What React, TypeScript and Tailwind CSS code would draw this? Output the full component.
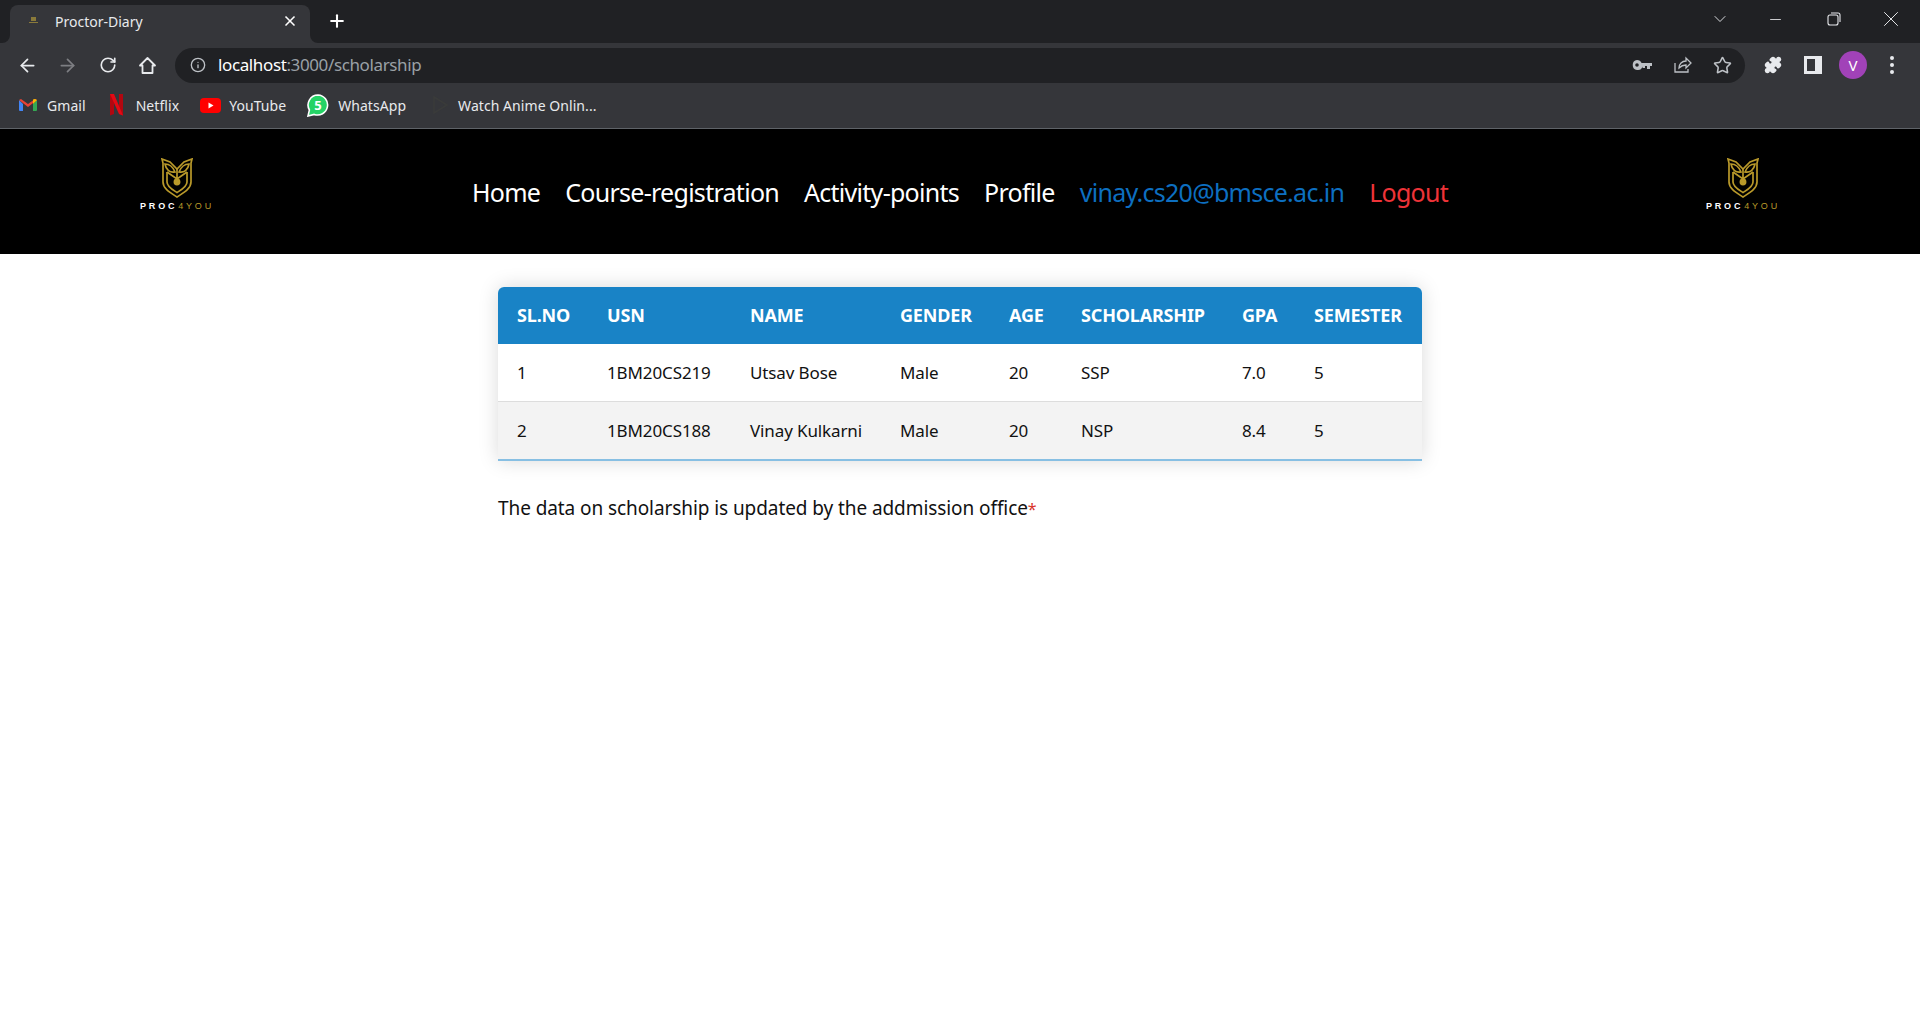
import { ArrowLeft, ArrowRight, ChevronDown, Info, Minus, Plus, Puzzle, RotateCw, Star, X } from 'lucide-react';

const students = [
  { id: 1, usn: '1BM20CS219', name: 'Utsav Bose', gender: 'Male', age: 20, scheme: 'SSP', gpa: '7.0', sem: 5 },
  { id: 2, usn: '1BM20CS188', name: 'Vinay Kulkarni', gender: 'Male', age: 20, scheme: 'NSP', gpa: '8.4', sem: 5 },
];

const headers = ['SL.NO', 'USN', 'NAME', 'GENDER', 'AGE', 'SCHOLARSHIP', 'GPA', 'SEMESTER'];
const colWidths = [90, 143, 150, 109, 72, 161, 72, 127];

function Logo() {
  return (
    <div className="mb-[14px] flex w-[74px] flex-col items-center">
      <svg width="32" height="40" viewBox="0 0 32 40" fill="none" stroke="#b9992a" strokeWidth="1.7">
        <path d="M1 1 L9 4 L16 11 L23 4 L31 1 L30 5 L30 24 C30 31 22 35 16 39 C10 35 2 31 2 24 L2 5 Z" />
        <path d="M6 14 L6 24 C6 29 12 32 16 34.5 C20 32 26 29 26 24 L26 14" />
        <path d="M4 6 C8 6 12 9 14 14 C9 15 5 12 4 6 Z M28 6 C24 6 20 9 18 14 C23 15 27 12 28 6 Z" />
        <path d="M16 11 L16 21 M6 14 L16 21 L26 14" />
        <circle cx="16" cy="24" r="2.6" fill="#b9992a" />
      </svg>
      <div className="mt-[3px] flex font-['Liberation_Sans',sans-serif] text-[9px] leading-[10px] font-bold tracking-[2.8px] whitespace-nowrap">
        <span className="text-white">PROC</span>
        <span className="ml-[1px] font-normal text-[#b9992a]">4YOU</span>
      </div>
    </div>
  );
}

function BrowserChrome() {
  return (
    <div className="font-['Noto_Sans',sans-serif] text-white">
      <div className="flex h-[43px] items-end bg-[#202124] pl-[10px]">
        <div className="relative flex h-[38px] w-[300px] items-center rounded-t-[8px] bg-[#35363a] pb-[6px] pl-[18px]">
          <svg width="8" height="8" viewBox="0 0 8 8" fill="#35363a" className="absolute bottom-0 -left-[8px]"><path d="M8 0v8H0a8 8 0 0 0 8-8Z" /></svg>
          <svg width="8" height="8" viewBox="0 0 8 8" fill="#35363a" className="absolute -right-[8px] bottom-0"><path d="M0 0v8h8a8 8 0 0 1-8-8Z" /></svg>
          <svg width="12" height="10" viewBox="0 0 12 10" fill="#8a7a3a"><path d="M3 1h5v4H3zM1 6h9v1H1z" /></svg>
          <span className="ml-[15px] text-[14px] text-[#e8eaed]">Proctor-Diary</span>
          <X size={16} strokeWidth={2.5} className="absolute left-[272px] text-white" />
        </div>
        <Plus size={20} strokeWidth={2.5} className="mb-[12px] ml-[17px] text-white" />
        <div className="ml-auto flex h-full items-center pb-[5px] text-[#e8eaed]">
          <ChevronDown size={20} strokeWidth={1.1} className="mr-[37px]" />
          <Minus size={17} strokeWidth={1.2} className="mr-[43px]" />
          <svg width="14" height="14" viewBox="0 0 14 14" fill="none" stroke="currentColor" strokeWidth="1.1" className="mr-[37px]">
            <rect x="1" y="3" width="10" height="10" rx="2" />
            <path d="M4 1h7a2 2 0 0 1 2 2v7" />
          </svg>
          <X size={26} strokeWidth={0.9} className="mr-[16px]" />
        </div>
      </div>
      <div className="flex h-[44px] items-center bg-[#35363a]">
        <ArrowLeft size={21} strokeWidth={2} className="ml-[17px] text-[#e8eaed]" />
        <ArrowRight size={21} strokeWidth={2} className="ml-[19px] text-[#7d7e82]" />
        <RotateCw size={18} strokeWidth={2.2} className="ml-[21px] text-[#e8eaed]" />
        <svg width="19" height="19" viewBox="0 0 19 19" fill="none" stroke="#e8eaed" strokeWidth="1.8" className="ml-[21px]">
          <path d="M9.5 2 2 9.5h2.5V17h10V9.5H17Z" strokeLinejoin="round" />
        </svg>
        <div className="ml-[18px] flex h-[35px] w-[1570px] items-center rounded-full bg-[#202124] pl-[15px]">
          <Info size={16} strokeWidth={2} className="text-[#bdc1c6]" />
          <span className="ml-[12px] text-[17px] tracking-[-0.38px] text-white">
            localhost<span className="text-[#9aa0a6]">:3000/scholarship</span>
          </span>
          <svg width="20" height="10" viewBox="0 0 20 10" fill="#bdc1c6" className="ml-auto">
            <path fillRule="evenodd" d="M5 0a5 5 0 0 1 4.6 3H20v3h-2v3h-3V6h-2v2h-2.5V6.4A5 5 0 1 1 5 0Zm0 3.2a1.8 1.8 0 1 0 0 3.6 1.8 1.8 0 0 0 0-3.6Z" />
          </svg>
          <svg width="20" height="20" viewBox="0 0 20 20" fill="none" stroke="#bdc1c6" strokeWidth="1.3" className="ml-[20px]">
            <path d="M3 8v9h13v-3M7 13c0-4 3-7 7-7V3l5 5-5 5v-3c-3 0-5 1-7 3Z" />
          </svg>
          <Star size={19} strokeWidth={2} className="mr-[13px] ml-[21px] text-[#bdc1c6]" />
        </div>
        <Puzzle size={18} fill="#e8eaed" className="ml-[19px] text-[#e8eaed]" />
        <svg width="18" height="18" viewBox="0 0 18 18" className="ml-[22px]">
          <path fillRule="evenodd" d="M0 0h18v18H0Zm3 3v12h8V3Z" fill="#e8eaed" />
        </svg>
        <div className="ml-[17px] flex h-[28px] w-[28px] items-center justify-center rounded-full bg-[#a142b8] text-[15px]">V</div>
        <div className="ml-[23px] flex flex-col gap-[3px]">
          <span className="h-[4px] w-[4px] rounded-full bg-[#e8eaed]" />
          <span className="h-[4px] w-[4px] rounded-full bg-[#e8eaed]" />
          <span className="h-[4px] w-[4px] rounded-full bg-[#e8eaed]" />
        </div>
      </div>
      <div className="flex h-[42px] items-center border-b border-[#5f6368] bg-[#35363a] pb-[5px] text-[14px] tracking-[0.06px] text-[#e8eaed]">
        <svg width="18" height="14" viewBox="0 0 18 14" className="ml-[19px]">
          <path d="M0 2v10a1 1 0 0 0 1 1h3V6Z" fill="#4285f4" />
          <path d="M18 2v10a1 1 0 0 1-1 1h-3V6Z" fill="#34a853" />
          <path d="M0 2 9 9l9-7-2-1-7 5-7-5Z" fill="#ea4335" />
          <path d="M14 6V1.5l2-.5 2 1Z" fill="#fbbc04" />
        </svg>
        <span className="ml-[10px]">Gmail</span>
        <svg width="13" height="22" viewBox="0 0 13 22" className="ml-[24px]">
          <path d="M0 0h4v20l-4 1.5Z" fill="#b20710" />
          <path d="M9 0h4v21.5l-4-1.5Z" fill="#b20710" />
          <path d="M0 0h4l9 21.5-4-1.5Z" fill="#e50914" />
        </svg>
        <span className="ml-[13px]">Netflix</span>
        <svg width="21" height="15" viewBox="0 0 21 15" className="ml-[21px]">
          <rect width="21" height="15" rx="4" fill="#f00" />
          <path d="m8.5 4.5 5 3-5 3Z" fill="#fff" />
        </svg>
        <span className="ml-[8px]">YouTube</span>
        <svg width="22" height="23" viewBox="0 0 22 23" className="ml-[21px]">
          <path d="M11 1a10 10 0 0 0-8.6 15L1 22l6.2-1.6A10 10 0 1 0 11 1Z" fill="#25d366" stroke="#fff" strokeWidth="1.6" />
          <text x="11" y="16" textAnchor="middle" fontSize="13" fontWeight="700" fill="#fff">5</text>
        </svg>
        <span className="ml-[9px]">WhatsApp</span>
        <svg width="15" height="18" viewBox="0 0 15 18" className="ml-[27px]">
          <path d="M1 1l13 8-13 8Z" fill="none" stroke="#3a3b3a" strokeWidth="1.5" />
        </svg>
        <span className="ml-[10px]">Watch Anime Onlin...</span>
      </div>
    </div>
  );
}

export default function App() {
  return (
    <div className="min-h-screen bg-white font-['Noto_Sans',sans-serif]">
      <BrowserChrome />
      <nav className="flex h-[125px] items-center justify-between bg-black px-[140px]">
        <Logo />
        <ul className="mt-[2px] flex gap-[25px] text-[25px] tracking-[-0.72px] whitespace-nowrap text-white">
          <li>Home</li>
          <li>Course-registration</li>
          <li>Activity-points</li>
          <li>Profile</li>
          <li className="text-[#0d6fc0]">vinay.cs20@bmsce.ac.in</li>
          <li className="text-[#ee3338]">Logout</li>
        </ul>
        <Logo />
      </nav>
      <main className="mx-auto w-[924px] pt-[33px]">
        <table className="w-full table-fixed overflow-hidden rounded-t-[6px] text-[17px] tracking-[-0.12px] text-[#111] shadow-[0_0_20px_rgba(0,0,0,0.15)]">
          <colgroup>
            {colWidths.map((w, i) => <col key={i} style={{ width: w }} />)}
          </colgroup>
          <thead>
            <tr className="h-[57px] bg-[#1983c6] text-left text-[18px] tracking-[-0.17px] text-white">
              {headers.map((h) => <th key={h} className="pl-[19px] font-bold">{h}</th>)}
            </tr>
          </thead>
          <tbody>
            {students.map((s) => (
              <tr key={s.id} className="h-[57px] border-b border-[#dddddd] even:bg-[#f3f3f3] last:h-[59px] last:border-b-2 last:border-[#87bfe3]">
                <td className="pl-[19px]">{s.id}</td>
                <td className="pl-[19px]">{s.usn}</td>
                <td className="pl-[19px]">{s.name}</td>
                <td className="pl-[19px]">{s.gender}</td>
                <td className="pl-[19px]">{s.age}</td>
                <td className="pl-[19px]">{s.scheme}</td>
                <td className="pl-[19px]">{s.gpa}</td>
                <td className="pl-[19px]">{s.sem}</td>
              </tr>
            ))}
          </tbody>
        </table>
        <p className="mt-[33px] text-[19px] tracking-[-0.08px] text-[#111]">
          The data on scholarship is updated by the addmission office<span className="text-[16px] text-[#d9342b]">*</span>
        </p>
      </main>
    </div>
  );
}
